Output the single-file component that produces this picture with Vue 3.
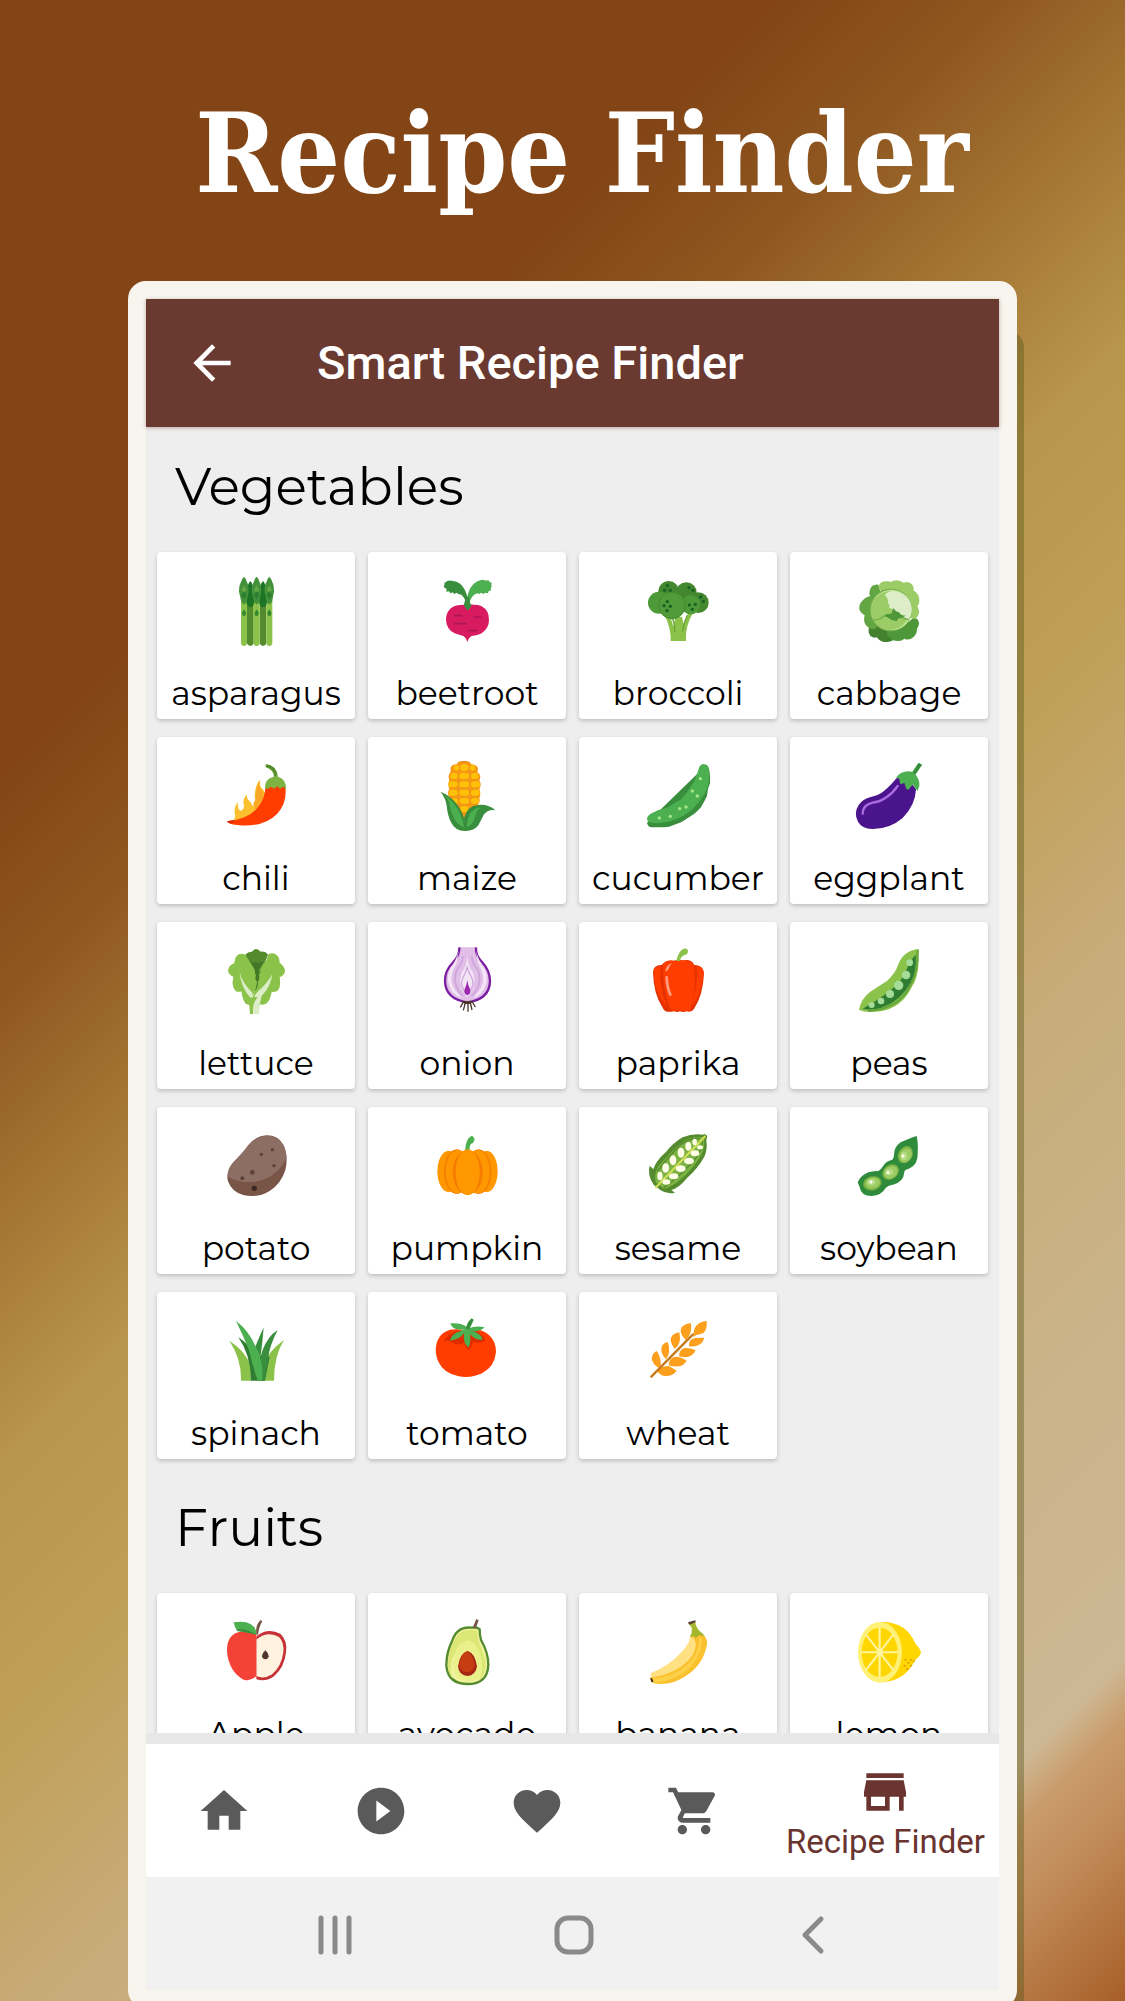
<script setup>
const art = {
  asparagus: {
    box: '270 405 216 216',
    svg: `<path fill="#558b2f" d="M351 480h20v130q-2 8-10 8t-10-8zM389 480h20v130q-2 8-10 8t-10-8z"/>
      <path fill="#8bc34a" d="M333 470h18v139q-1 9-9 9t-9-9zM370 470h19v139q-1 9-9 9t-10-9zM409 470h18v139q-1 9-9 9t-9-9z"/>
      <path fill="#1b7524" d="M361 424q6 4 8 18l5 30q0 30-13 30t-12-30l4-30q2-14 8-18zM399 424q6 4 8 18l5 30q0 30-13 30t-12-30l4-30q2-14 8-18z"/>
      <path fill="#43913a" d="M342 410q7 6 9 17 5 8 5 28l-6 30-8 9-8-9-7-30q0-20 6-28 2-11 9-17zM380 410q7 6 9 17 5 8 5 28l-6 30-8 9-8-9-7-30q0-20 6-28 2-11 9-17zM418 410q7 6 9 17 5 8 5 28l-6 30-8 9-8-9-7-30q0-20 6-28 2-11 9-17z"/>
      <path fill="#65a844" d="M342 436l8 14-8 8-8-8zM380 436l8 14-8 8-8-8zM418 436l8 14-8 8-8-8z"/>
      <path fill="#2e7d32" d="M334 466l8-12 8 12-8 12zM372 466l8-12 8 12-8 12zM410 466l8-12 8 12-8 12z"/>
      <path fill="#33872d" d="M342 508l6 10-2 9h-8l-2-9zM380 508l6 10-2 9h-8l-2-9zM418 508l6 10-2 9h-8l-2-9z"/>`,
  },
  beetroot: {
    box: '903 405 216 216',
    svg: `<path fill="#388e3c" d="M1012 502q-3-24-18-38l-9-2-5-4-7 4-5-5-7 3-4-6-8 1 1-8q-8-3-9-8 4-3 2-11 6 0 8-5 8-3 14-1 35 2 47 48v32z"/>
      <path fill="#4caf50" d="M1009 503q0-61 33-79 14-6 20-4l7 2 6-2 3 5 7 3-1 7q3 6-2 10l2 6-8 2-2 7-8-2-6 4-6-4-6 4-6-2-6 2q-20 12-18 41z"/>
      <path fill="#d81b60" d="M1012 605q-3-12-12-17-16-4-26-8-25-12-26-41 0-27 21-39 11-7 43-6 31-2 43 5 22 12 22 40 0 25-21 40-10 6-31 9-10 5-13 17z"/>
      <path stroke="#ad1457" stroke-width="5" stroke-linecap="round" fill="none" d="M975 527h19M1032 531h20M974 551h34M1016 572h23"/>
      <path fill="#388e3c" d="M1001 496q4-12 6-24l11-2q0 18 7 27l-12 15z"/>`,
  },
  broccoli: {
    box: '246 105 216 216',
    svg: `<path fill="#8bc34a" d="M312 222l18 2 10 36 6-30h20l5 24 13-32 15-3q-24 40-21 84h-46q2-38-20-81z"/>
      <path fill="none" stroke="#689f38" stroke-width="4" d="M333 225q13 25 11 52M382 225q-12 25-14 50"/>
      <g fill="#43872f"><circle cx="326" cy="154" r="31"/><circle cx="379" cy="158" r="31"/></g>
      <circle cx="415" cy="188" r="31" fill="#43872f"/>
      <g fill="#4e9a38"><circle cx="297" cy="188" r="33"/><circle cx="392" cy="194" r="29"/></g>
      <circle cx="336" cy="196" r="40" fill="#519b3b" stroke="#43872f" stroke-width="3"/>
      <g fill="#176323"><circle cx="322" cy="137" r="5"/><circle cx="314" cy="151" r="5"/><circle cx="331" cy="151" r="5"/><circle cx="387" cy="143" r="5"/><circle cx="399" cy="151" r="5"/><circle cx="422" cy="171" r="5"/><circle cx="430" cy="184" r="5"/><circle cx="406" cy="193" r="5"/><circle cx="388" cy="195" r="5"/><circle cx="397" cy="208" r="5"/><circle cx="322" cy="185" r="5"/><circle cx="312" cy="197" r="5"/><circle cx="331" cy="199" r="5"/><circle cx="321" cy="212" r="5"/></g>`,
  },
  cabbage: {
    box: '879 105 216 216',
    svg: `<path fill="#43812f" d="M928 258q-8 26 10 34 8 2 12 0 12 16 28 14 16 2 24-8l-20-40z"/>
      <path fill="#62a644" d="M955 134q-22-2-26 18-3 10 2 16-20 4-31 24-6 16 4 26 8 6 10 8-6 20 6 32 10 10 24 10l40-40z"/>
      <path fill="#4f983a" d="M980 270l60-20 20-16q16 0 17 16 0 10-6 16 0 18-14 28-14 8-24 2-10 10-24 6-8 2-16-6-14-8-13-26z"/>
      <path fill="#9ccc65" d="M955 140q6-18 28-16 6 0 8 2 20-12 40 2 16-6 26 6 6 8 3 17 18 10 18 32 0 12-6 16 8 12 4 24-4 12-16 14l-70-30z"/>
      <circle cx="992" cy="210" r="64" fill="#72ac4b"/><circle cx="994" cy="210" r="61" fill="#c5e89a"/>
      <circle cx="990" cy="212" r="58" fill="#9ccc65"/>
      <path fill="#dcedc8" d="M974 165q14-16 38-10 40 12 43 50 0 22-11 33-14-2-20-16-14 0-24-12-6-6-12-7 2-10-4-14 2-14-10-24z"/>
      <path fill="#4f983a" d="M1000 204l8 10 9 3 6 8 14 2-11 6-12 3-4 8-15-4-14-9-11-2 10-7 14-1z"/>
      <path fill="none" stroke="#72ac4b" stroke-width="4" d="M938 240q22 2 34-13M1026 233l20 6"/>`,
  },
  chili: {
    box: '240 90 216 216',
    svg: `<path fill="#fbc02d" d="M280 272q8-10 4-22-2-22 10-33-2 16 4 23 4 6 12-4 4-8 0-18 0-16 11-24-1 14 7 18 8 8 10 16 8-8 8-19-4-10 0-28 4-24 15-31-5 18 6 26 10 10 10 28l-20 50-40 24z"/>
      <path fill="#f9a825" d="M340 220q10-10 7-26 2-28 14-43-6 18 3 28 9 10 4 27l-20 34z"/>
      <path fill="#ff3d00" d="M262 274q66-6 94-45 20-28 20-58l32-8 28 8q6 46-24 80-40 40-112 35-36-2-38-12z"/>
      <path fill="#dd2c00" d="M261 274q8-3 24-3-2 6-7 9-14 1-17-6z"/>
      <path fill="#7cb342" d="M375 176q-2-30 26-36 2-18-24-28v-9q34 4 37 37 26 8 24 38l-8-8-9 6-9-7-10 7-9-6-9 6z"/>
      <path fill="#558b2f" d="M379 103q28 3 32 33l-7 4q-1-24-26-29z"/>`,
  },
  maize: {
    box: '873 90 216 216',
    svg: `<path fill="#f59714" d="M972 93q18-2 22 10 26 2 18 24 14 8 6 24 8 14 0 26 6 14 0 26 4 16-6 24l-40 40-36-40q-14-10-8-24-8-14 0-26-6-16 0-26-6-16 4-26-4-22 18-22 4-12 22-10z"/>
      <g fill="#ffc107"><rect x="941" y="105" width="16" height="17" rx="8"/><rect x="961" y="103" width="24" height="19" rx="7"/><rect x="990" y="105" width="16" height="17" rx="8"/>
      <rect x="931" y="129" width="22" height="18" rx="8"/><rect x="958" y="129" width="29" height="18" rx="8"/><rect x="993" y="129" width="23" height="18" rx="8"/>
      <rect x="925" y="154" width="27" height="18" rx="8"/><rect x="958" y="154" width="29" height="18" rx="8"/><rect x="993" y="154" width="27" height="18" rx="8"/>
      <rect x="927" y="179" width="26" height="18" rx="8"/><rect x="958" y="179" width="29" height="18" rx="8"/><rect x="993" y="179" width="26" height="18" rx="8"/>
      <rect x="936" y="204" width="18" height="17" rx="8"/><rect x="959" y="204" width="28" height="17" rx="8"/><rect x="993" y="204" width="24" height="17" rx="8"/><rect x="961" y="228" width="25" height="18" rx="8"/></g>
      <path fill="#f57f17" d="M959 99q13-12 27 0-13-5-27 0z"/>
      <path fill="#388e3c" d="M902 185q54 24 70 80 10-38 42-40 30-4 52 16-20-4-34 12-8 16-17 33-14 18-40 17-30 0-42-26-10-20-13-50-2-20-18-42z"/>
      <path fill="#4caf50" d="M914 196q46 30 58 96-30-10-42-60-2-22-16-36zM980 292q4-58 44-60-14 8-18 26-8 30-26 34z"/>`,
  },
  cucumber: {
    box: '246 90 216 216',
    svg: `<path fill="#388e3c" d="M440 104q12 10 10 56l-6 16-3 22-8 16-10 18-18 18-18 12-22 14-38 14-14 2h-38q-12-2-14-14z"/>
      <path fill="#4caf50" d="M430 102q16 0 17 22 4 40-14 68-22 40-60 64-38 22-80 24-32 0-32-12 0-14 22-22l12-6 30-8 20-14 16-8 18-20 16-24 10-16 10-30q4-18 15-18z"/>
      <g fill="#a5e887"><circle cx="421" cy="146" r="5"/><circle cx="397" cy="183" r="5"/><circle cx="412" cy="198" r="5"/><circle cx="378" cy="231" r="5"/><circle cx="359" cy="236" r="5"/><circle cx="331" cy="259" r="5"/><circle cx="298" cy="264" r="5"/></g>`,
  },
  eggplant: {
    box: '879 90 216 216',
    svg: `<path fill="#4a148c" d="M1009 145l32-2 27 35q-2 48-40 86-40 34-92 33-30-1-42-22-14-26 2-50 12-18 36-24 24-4 40-18 24-20 37-38z"/>
      <path fill="none" stroke="#ab6be0" stroke-width="7" stroke-linecap="round" d="M908 251q0-26 30-33 22-3 38-14 22-14 37-36"/>
      <path fill="#4caf50" d="M1008 143q18-24 49-18l18-26 11 5-20 29q14 18 12 34l-5 16-10-12-4-8-14 16-6-2-6-18-12 4-4-18z"/>
      <path fill="#388e3c" d="M1076 99l10 5-20 30-7-7z"/>`,
  },
  lettuce: {
    box: '240 105 216 216',
    svg: `<path fill="#558b2f" d="M316 134q8-10 20-9 12-16 26 0 14-2 22 9l-16 40-10 36-8 50-16-60-20-40z"/>
      <path fill="#33691e" d="M327 152q14 10 21 4 6 8 24-4l-18 30q8 10 2 20l-2 50-12-22-2-56z" opacity=".55"/>
      <path fill="#8bc34a" d="M316 134q-20-8-30 10-2 12-4 16-16 6-18 22 2 12 16 18 0 6-2 14-2 16 8 28 8 6 18 2 4 28 14 38l12 4 10-30q6-14 12-40-10-10-4-18-4-10-4-20-10-16-28-44zM384 134q12-8 25 0 10 8 10 24 14 10 16 24 0 12-16 20 4 28-4 38-8 8-20 5-4 24-14 34-10 8-20 4l-14 28-15-16q-4-30 12-48 12-20 10-32 8-12 2-20 8-6 4-16 6-10 10-18 12-10 14-27z"/>
      <path fill="#dcedc8" d="M298 184q8 34 40 66l-4 16q-30-28-36-82zM397 192q-4 36-32 66-8 24-7 54h-28q-2-38 24-68 30-26 43-52z"/>
      <path fill="#8bc34a" d="M326 268q2 20 4 44h9q-2-34 14-50l-14-2z"/>`,
  },
  onion: {
    box: '873 105 216 216',
    svg: `<path fill="none" stroke="#4e342e" stroke-width="4" d="M970 276l-9 16M976 278l-6 23M984 278v27M991 278l5 22M997 276l9 15"/>
      <path fill="#e1bee7" stroke="#7b1fa2" stroke-width="7" d="M958 112q1 24-18 44-26 26-25 58 2 54 67 63 66-9 68-63 0-32-24-58-20-20-18-44"/>
      <path fill="#f3e5f5" d="M956 121q-6 30-28 60-8 24-2 40 10 36 40 42-40-34-30-70 4-16 14-34zM1008 121q6 30 28 60 8 24 2 40-10 36-40 42 40-34 30-70-4-16-14-34z"/>
      <path fill="none" stroke="#cda4da" stroke-width="5" d="M969 138q-2 24-18 40-18 44 18 80M995 138q2 24 18 40 18 44-18 80"/>
      <path fill="#f3e5f5" d="M982 138q2 30 16 48 16 38-16 76-32-38-16-76 14-18 16-48z"/>
      <path fill="none" stroke="#d1a8de" stroke-width="4" d="M981 172q-4 18-12 30-12 26 13 52 25-26 13-52-8-12-14-30z"/>
      <path fill="#9c27b0" d="M982 211q2 16 8 26 4 16-8 18-12-2-8-18 6-10 8-26z"/>
      <path fill="#4e342e" d="M962 273h41l-14 9h-14z"/>`,
  },
  paprika: {
    box: '246 105 216 216',
    svg: `<path fill="#e53100" d="M279 186q2-22 26-21 12-16 36-13 14-4 30-1 24-4 32 14 26 0 29 23-2 66-30 109-8 12-24 7-8 4-18 0-8 4-18 0-28 6-34-11-28-42-29-107z"/>
      <path fill="#ff3d00" d="M309 164q12-16 34-11 12-6 26 0 24-4 33 12 10 76-12 136-18 6-30 0-14 4-26-1-24-40-25-136z"/>
      <path fill="#ff3d00" d="M281 186q2-18 21-18-8 58 19 120-38-36-40-102zM431 188q-2-20-21-20 6 56-17 122 36-44 38-102z"/>
      <path fill="none" stroke="#ff9e80" stroke-width="8" stroke-linecap="round" d="M320 202q1 30 11 52"/><path fill="#ff9e80" d="M316 184q2-20 20-24-8 8-10 16-4 8-10 8z"/>
      <path fill="#8bc34a" d="M349 153q6-28 20-36 12-4 15 5 0 10-9 13-12 2-15 18z"/>`,
  },
  peas: {
    box: '879 105 216 216',
    svg: `<path fill="#8bc34a" d="M1077 117q-46 4-62 46-8 26-34 50-22 14-50 32-28 20-34 55 22 10 64 4 64-10 94-72 20-30 21-80z"/>
      <path fill="#2e7d32" d="M1067 134q-18 20-23 34-16 50-60 78-20 18-76 50 46 10 92-20 44-30 62-80 8-34 5-62z"/>
      <path fill="none" stroke="#66a53c" stroke-width="6" d="M1072 120q4 62-20 104-34 74-128 79"/>
      <g fill="#a5dc98"><circle cx="1049" cy="158" r="10"/><circle cx="1038" cy="195" r="13"/><circle cx="1016" cy="226" r="14"/><circle cx="990" cy="252" r="12"/><circle cx="963" cy="273" r="10"/><circle cx="935" cy="285" r="9"/></g>`,
  },
  potato: {
    box: '240 90 216 216',
    svg: `<path fill="#795548" d="M380 106q34 0 50 28 16 34 6 76-12 40-46 62-34 22-78 14-36-8-48-42-8-30 20-58 26-26 40-48 22-30 56-32z"/>
      <path fill="#8d6e63" d="M380 107q34 0 50 28 10 22 9 38-10 28-42 52-36 26-90 20-34-6-44-16-2-24 20-46 28-28 42-48 20-26 55-28z"/>
      <g fill="#5d4037"><circle cx="397" cy="149" r="5"/><circle cx="364" cy="163" r="5"/><circle cx="402" cy="197" r="5"/><circle cx="337" cy="217" r="7"/><circle cx="307" cy="235" r="6"/></g><circle cx="343" cy="265" r="8" fill="#3e2723"/>`,
  },
  pumpkin: {
    box: '873 90 216 216',
    svg: `<path fill="#4caf50" d="M975 152q2-36 20-45 6 1 9 12l-5 10q-12 2-10 24z"/>
      <ellipse cx="926" cy="214" rx="34" ry="62" fill="#ff9800"/><ellipse cx="1040" cy="214" rx="33" ry="62" fill="#ff9800"/>
      <ellipse cx="950" cy="215" rx="38" ry="67" fill="#f57c00"/><ellipse cx="1016" cy="215" rx="38" ry="67" fill="#f57c00"/>
      <ellipse cx="953" cy="215" rx="36" ry="66" fill="#ff9800"/><ellipse cx="1013" cy="215" rx="36" ry="66" fill="#ff9800"/>
      <ellipse cx="983" cy="217" rx="45" ry="67" fill="#f57c00"/>
      <ellipse cx="983" cy="217" rx="36" ry="69" fill="#ff9800"/>`,
  },
  sesame: {
    box: '246 90 216 216',
    svg: `<path fill="#558b2f" d="M434 102l8 6-3 12q4 28-6 50-20 36-52 64-24 30-47 36l11 8q-24 6-44-8l-20-16q-20-30-12-57l11 11q6-24 38-52 22-28 50-44 30-12 60-8z"/>
      <path fill="#7cb342" d="M432 112q4 30-8 52-26 44-62 74-24 22-50 28l-24-18q-8-20 6-48 36-44 78-78 28-14 60-10z"/>
      <path fill="none" stroke="#558b2f" stroke-width="4" d="M428 124q-4 38-38 70-36 40-78 68M420 116q-44-4-74 34-28 28-54 64"/>
      <path stroke="#d4e157" stroke-width="6" d="M286 264L436 108"/>
      <g fill="#fffde7"><ellipse cx="404" cy="126" rx="7" ry="10"/><ellipse cx="385" cy="139" rx="9" ry="13"/><ellipse cx="363" cy="158" rx="10" ry="15"/><ellipse cx="339" cy="181" rx="10" ry="15"/><ellipse cx="317" cy="204" rx="10" ry="14"/><ellipse cx="300" cy="228" rx="8" ry="13"/><ellipse cx="420" cy="142" rx="9" ry="6"/><ellipse cx="405" cy="160" rx="13" ry="9"/><ellipse cx="387" cy="183" rx="15" ry="10"/><ellipse cx="362" cy="206" rx="15" ry="10"/><ellipse cx="341" cy="229" rx="14" ry="9"/><ellipse cx="319" cy="246" rx="12" ry="8"/></g>`,
  },
  soybean: {
    box: '879 90 216 216',
    svg: `<path fill="#2e8b3c" d="M1070 108q5 22 3 52 2 34-26 46-14 2-14 10-2 30-34 38-16 2-22 10-12 22-42 24-32 0-36-26l-6-15q10-22 32-30 18-4 30-4 8-4 14-14 8-16 28-20 4-4 5-14 0-24 20-38 30-14 48-19z"/>
      <g fill="#7cb342"><ellipse cx="1036" cy="164" rx="27" ry="21" transform="rotate(-60 1036 164)"/><ellipse cx="992" cy="216" rx="27" ry="21" transform="rotate(-38 992 216)"/><ellipse cx="937" cy="250" rx="28" ry="21" transform="rotate(-12 937 250)"/></g>
      <g fill="#9ccc65"><ellipse cx="1037" cy="166" rx="22" ry="17" transform="rotate(-60 1037 166)"/><ellipse cx="992" cy="217" rx="22" ry="17" transform="rotate(-38 992 217)"/><ellipse cx="938" cy="249" rx="22" ry="16" transform="rotate(-12 938 249)"/></g>
      <g fill="#b5dc84"><ellipse cx="1032" cy="168" rx="10" ry="13"/><ellipse cx="988" cy="216" rx="12" ry="10"/><ellipse cx="934" cy="246" rx="13" ry="9"/></g>
      <g fill="#f9fbe7"><circle cx="1029" cy="168" r="5"/><circle cx="984" cy="218" r="5"/><circle cx="933" cy="246" r="5"/></g>`,
  },
  spinach: {
    box: '240 645 216 216',
    svg: `<path fill="#8bc34a" d="M303 842q2-64-35-120 50 32 64 76v44zM402 842q0-74 30-122-48 34-62 76l-10 46z"/>
      <path fill="#2e7d32" d="M332 842q2-74-37-130 38 24 54 64l14-10 26 4-14 72z"/>
      <path fill="#388e3c" d="M356 842q2-70 12-92 16-42 45-60-24 46-29 86l-10 66zM346 740q16-40 25-57-4 50-10 90z"/>
      <path fill="#4caf50" d="M288 663q26 54 40 91 10 44 25 88h13q6-52-16-96-24-56-62-83z"/>`,
  },
  tomato: {
    box: '873 645 216 216',
    svg: `<path fill="#ff3d00" d="M978 690q40-8 68 14 22 18 22 52-4 44-42 64-34 16-70 9-44-8-60-42-14-28-6-58 14-42 60-41z"/>
      <path fill="#dd2c00" d="M908 728q14-24 40-34l60-2q24 14 28 30-24 12-37 2-4 20-12 26-12-6-14-22-20 12-42-4-14-6-23 4z"/>
      <path fill="#4caf50" d="M974 686q-34 10-43-16 28-2 44 7l6 5q4-18 16-26l3 3q-10 10-12 25 20-8 46-2-16 16-40 11 30 6 34 26-26 2-38-18 4 22-4 42-18-12-14-43-14 20-42 22 4-20 30-28z"/>
      <path fill="#388e3c" d="M995 655l6 5-13 28-10-2q2-18 17-31z"/>`,
  },
  wheat: {
    box: '246 645 216 216',
    svg: `<path fill="#fb9f1c" d="M440 663q4 36-20 40-12 0-20 8-2-44 40-48zM393 670q4 34-16 50-22-22-12-38 12-12 28-12zM433 713q-8 30-46 26-2-24 20-25zM358 697q8 36-14 50-20-28-6-42 8-6 20-8zM407 751q-12 28-50 18 0-20 16-25 16-2 34 7zM323 726q12 32-6 52-20-24-10-42 4-8 16-10zM380 782q-14 26-54 14 0-22 20-26 18 0 34 12zM291 753q16 28 10 52-20-6-26-28 2-20 16-24zM350 812q-12 18-38 16-14-4-21-16 10-14 36-14z"/>
      <path stroke="#c77a1a" stroke-width="7" stroke-linecap="round" d="M274 830L398 704"/>`,
  },
  apple: {
    box: '300 405 216 216',
    svg: `<path fill="#c63238" d="M409 466q34-28 72-8 22 20 17 56-4 44-36 72-24 18-53 9z"/>
      <path fill="#fff3e0" d="M409 476q34-28 68-8 16 16 13 46-6 44-34 66-24 16-47 5z"/>
      <path fill="#f44336" d="M409 458q-20-10-48-6-42 8-40 60 6 60 50 84 20 6 38-10z"/>
      <path fill="#4caf50" d="M341 424q64-10 70 37-34-8-60-13-8-10-10-24z"/>
      <path fill="#388e3c" d="M350 445q34-2 59 16l-6-2-52-9z"/>
      <path fill="#795548" d="M409 460q-4-28 13-43l5 4q-10 16-13 40z"/>
      <path fill="#4e342e" d="M436 508q10 8 10 18-2 9-10 9t-10-9q0-10 10-18z"/>`,
  },
  avocado: {
    box: '933 405 216 216',
    svg: `<path fill="#f0f4a0" stroke="#558b2f" stroke-width="7" d="M1056 440q16-2 23 5 0 18 4 32 22 38 22 74-2 58-62 58-58 0-64-54 0-42 17-74 14-46 60-41z"/>
      <path fill="#dce775" d="M1054 447q14 0 18 4 2 34 12 50 16 34 12 60-4 26-22 38 20-30 8-72-8-30-32-46-32 4-42 28-24 40-10 84-18-20-14-54 6-38 20-64 16-30 50-28z"/>
      <path fill="#eaf18a" d="M1043 478q20 2 34 32 20 60-4 84-30 16-60-2-24-30-4-84 10-28 34-30z"/>
      <path fill="#a52714" d="M1043 510q22 6 28 46-4 28-29 29-26-2-28-29 6-40 29-46z"/>
      <path fill="#c63d12" d="M1041 510q16 8 23 42-2 20-22 22-22-2-24-20 4-36 23-44z"/>
      <path fill="#795548" d="M1058 440l11-26 7 4-8 23z"/>`,
  },
  banana: {
    box: '246 135 216 216',
    svg: `<g transform="scale(1.081 1)"><path fill="#fbc02d" d="M362 196l28-10q20 10 18 34-10 62-58 94-42 32-90 23-12-6-8-18 44-22 78-56 30-28 32-67z"/>
      <path fill="#ffe082" d="M362 195l10 8q14 26-14 64-38 42-100 52-10-4-4-14 50-22 78-56 28-30 30-54z"/>
      <path fill="#fdd04a" d="M385 197q6 44-30 82-40 40-98 44l4 12q60-6 96-42 40-44 36-92z"/>
      <path fill="#a5b52c" d="M360 199q8-14 6-28l-10-15 19-5q2 24 20 36l6 8-16-2-8 9-5-7z"/>
      <path fill="#5d4037" d="M355 154l20-6 2 5-18 8z"/><path fill="#3e2723" d="M250 320q8 2 9 12l-5 2z"/></g>`,
  },
  lemon: {
    box: '879 135 216 216',
    svg: `<g transform="scale(1.081 1)"><path fill="#ffd600" d="M892 153q68-2 95 66l9 11q4 8 6 14-2 8-6 13l-11 11q-26 62-93 66z"/>
      <ellipse cx="888" cy="244" rx="61" ry="91" fill="#fff176"/><ellipse cx="887" cy="244" rx="50" ry="74" fill="#ffd600"/>
      <path stroke="#fff59d" stroke-width="6" d="M887 168v152M836 244h104M850 192l74 104M924 192l-74 104"/><ellipse cx="888" cy="244" rx="9" ry="12" fill="#fff59d"/>
      <g fill="#e09a00"><circle cx="959" cy="266" r="3"/><circle cx="974" cy="266" r="3"/><circle cx="982" cy="271" r="3"/><circle cx="967" cy="275" r="3"/><circle cx="956" cy="284" r="3"/><circle cx="974" cy="284" r="3"/><circle cx="964" cy="294" r="3"/></g></g>`,
  },
}

const sections = [
  {
    title: 'Vegetables',
    items: ['asparagus', 'beetroot', 'broccoli', 'cabbage', 'chili', 'maize', 'cucumber', 'eggplant', 'lettuce', 'onion', 'paprika', 'peas', 'potato', 'pumpkin', 'sesame', 'soybean', 'spinach', 'tomato', 'wheat'],
  },
  { title: 'Fruits', items: ['Apple', 'avocado', 'banana', 'lemon'] },
]

const tabs = [
  { name: 'Home', d: 'M10 20v-6h4v6h5v-8h3L12 3 2 12h3v8z' },
  { name: 'Videos', d: 'M12 2C6.48 2 2 6.48 2 12s4.48 10 10 10 10-4.48 10-10S17.520 2 12 2zm-2 14.500v-9l6 4.500-6 4.500z' },
  { name: 'Favourites', d: 'M12 21.350l-1.450-1.320C5.400 15.360 2 12.280 2 8.500 2 5.420 4.420 3 7.500 3c1.740 0 3.410.81 4.500 2.090C13.090 3.810 14.760 3 16.500 3 19.580 3 22 5.420 22 8.500c0 3.780-3.400 6.860-8.550 11.540L12 21.350z' },
  { name: 'Shopping list', d: 'M7 18c-1.100 0-1.990.9-1.990 2S5.900 22 7 22s2-.9 2-2-.9-2-2-2zM1 2v2h2l3.600 7.590-1.350 2.450c-.16.28-.25.61-.25.96 0 1.100.9 2 2 2h12v-2H7.420l-.25-.25.03-.12.9-1.630h7.450c.75 0 1.410-.41 1.750-1.030l3.580-6.490c.08-.14.12-.31.12-.48 0-.55-.45-1-1-1H5.210l-.94-2H1zm16 16c-1.100 0-1.990.9-1.990 2s.89 2 1.990 2 2-.9 2-2-.9-2-2-2z' },
]
</script>

<template>
  <main class="page">
    <h1 class="headline">Recipe Finder</h1>
    <div class="phone">
      <header class="appbar">
        <button class="back" type="button" aria-label="Back">
          <svg viewBox="0 0 24 24"><path d="M20 11H7.830l5.590-5.590L12 4l-8 8 8 8 1.410-1.410L7.830 13H20v-2z" /></svg>
        </button>
        <h2>Smart Recipe Finder</h2>
      </header>

      <div class="list">
        <section v-for="section in sections" :key="section.title">
          <h3>{{ section.title }}</h3>
          <div class="grid">
            <button v-for="item in section.items" :key="item" class="card" type="button">
              <svg :viewBox="art[item.toLowerCase()].box" aria-hidden="true" v-html="art[item.toLowerCase()].svg"></svg>
              <span>{{ item }}</span>
            </button>
          </div>
        </section>
      </div>

      <nav class="tabs">
        <a v-for="tab in tabs" :key="tab.name" href="#" :aria-label="tab.name">
          <svg viewBox="0 0 24 24"><path :d="tab.d" /></svg>
        </a>
        <a class="active" href="#" aria-current="page">
          <svg viewBox="0 0 24 24"><path d="M20 4H4v2h16V4zm1 10v-2l-1-5H4l-1 5v2h1v6h10v-6h4v6h2v-6h1zm-9 4H6v-4h6v4z" /></svg>
          <span>Recipe Finder</span>
        </a>
      </nav>

      <div class="system">
        <button type="button" aria-label="Recent apps">
          <svg viewBox="0 0 40 40"><path d="M6 3v34M20 3v34M34 3v34" /></svg>
        </button>
        <button type="button" aria-label="Home screen">
          <svg viewBox="0 0 40 40"><rect x="3" y="3" width="34" height="34" rx="11" /></svg>
        </button>
        <button type="button" aria-label="Go back">
          <svg viewBox="0 0 40 40"><path d="M28 4L12 20l16 16" /></svg>
        </button>
      </div>
    </div>
  </main>
</template>

<style>
body {
  margin: 0;
}
</style>

<style scoped>
.page {
  box-sizing: border-box;
  display: flex;
  flex-direction: column;
  height: 100vh;
  overflow: hidden;
  padding: 0 108px 0 128px;
  background: linear-gradient(135deg, #834516 0%, #834516 25%, #8f5720 32%, #a97d39 41%, #b8964b 47%, #bf9f56 55%, #c8ac7a 66%, #cab287 76%, #cdb896 89%, #c99c6b 91%, #c08a58 94%, #a85f28 100%);
}

.headline {
  flex: none;
  margin: 0;
  padding: 84px 0 57px 19px;
  color: #fff;
  font: 700 110px/140px "Roboto Slab", "DejaVu Serif Condensed", "DejaVu Serif", serif;
  text-align: center;
  white-space: nowrap;
}

.phone {
  flex: 1;
  min-height: 0;
  display: flex;
  flex-direction: column;
  margin-bottom: -7px;
  border: 18px solid #f8f4ee;
  border-radius: 18px;
  background: #eee;
  box-shadow: 7px 49px 0 rgba(84, 84, 24, 0.4);
}

button {
  margin: 0;
  padding: 0;
  border: 0;
  background: none;
}

svg {
  display: block;
}

.appbar {
  flex: none;
  display: flex;
  align-items: center;
  gap: 77px;
  height: 128px;
  padding-left: 38px;
  background: #6a3930;
  color: #fff;
  box-shadow: 0 1px 4px rgba(106, 57, 48, 0.4);
  z-index: 1;
}

.back svg {
  width: 56px;
  height: 56px;
  fill: #fff;
}

.appbar h2 {
  margin: 0;
  font: 500 47px/56px Roboto, sans-serif;
}

.list {
  flex: 1;
  min-height: 0;
  overflow: hidden;
  padding: 0 11px;
}

section + section {
  margin-top: 9px;
}

h3 {
  margin: 0;
  padding: 28px 18px 33px;
  color: #000;
  font: 400 52px/64px Montserrat, Inter, sans-serif;
}

.grid {
  display: grid;
  grid-template-columns: repeat(4, minmax(0, 1fr));
  gap: 18px 13px;
}

.card {
  display: flex;
  flex-direction: column;
  align-items: center;
  gap: 26px;
  padding: 23px 0 6px;
  border-radius: 4px;
  background: #fff;
  box-shadow: 0 2px 4px rgba(0, 0, 0, 0.2);
  color: #000;
  font: 400 33px/40px Montserrat, Inter, sans-serif;
}

.card svg {
  width: 72px;
  height: 72px;
}

.tabs {
  flex: none;
  display: flex;
  height: 133px;
  border-top: 11px solid #e8e8e8;
  background: #fff;
}

.tabs a {
  flex: 1;
  display: flex;
  flex-direction: column;
  align-items: center;
  justify-content: center;
  color: #5a5a5a;
  text-decoration: none;
}

.tabs svg {
  width: 56px;
  height: 56px;
  fill: currentColor;
}

.tabs .active {
  flex: none;
  padding: 6px 14px 0;
  color: #6a3530;
  font: 400 33px/44px Roboto, sans-serif;
}

.system {
  flex: none;
  box-sizing: border-box;
  display: flex;
  align-items: center;
  justify-content: center;
  gap: 199px;
  height: 113px;
  padding: 2px 0 0 2px;
  background: #f1f1f1;
}

.system svg {
  width: 40px;
  height: 40px;
  fill: none;
  stroke: #8a8a8a;
  stroke-width: 5;
  stroke-linecap: round;
  stroke-linejoin: round;
}
</style>
